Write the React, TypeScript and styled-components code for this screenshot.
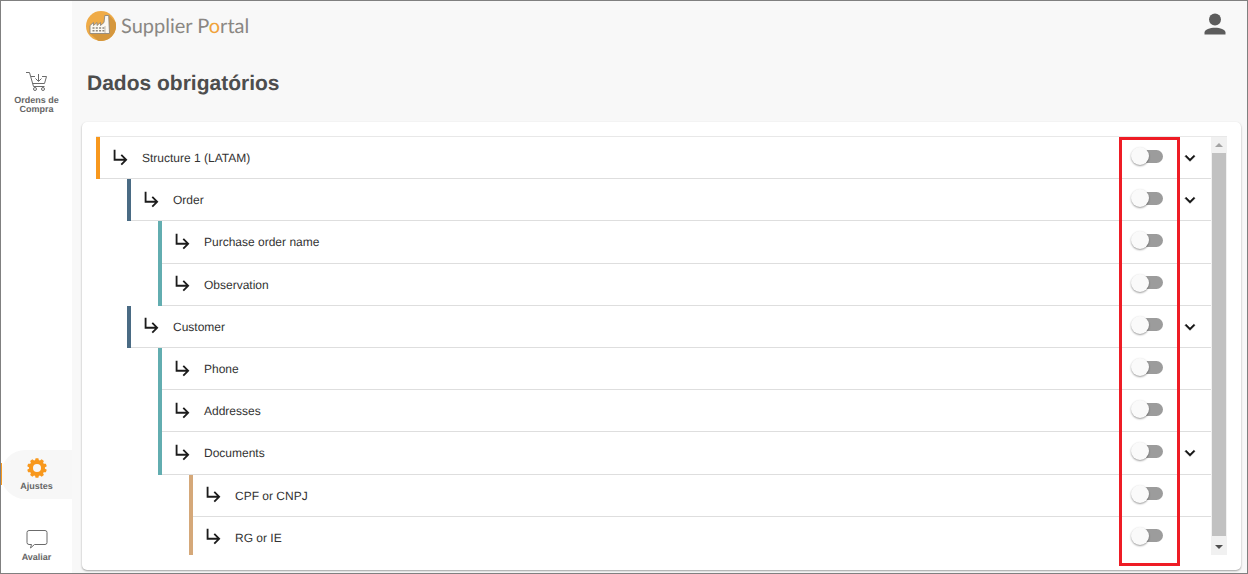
import React from "react";
import styled, { createGlobalStyle } from "styled-components";

const GlobalStyle = createGlobalStyle`
  * { box-sizing: border-box; }
  body { margin: 0; background: #f8f8f8; font-family: "Liberation Sans", Arial, sans-serif; color: #333; text-rendering: geometricPrecision; }
  button { border: 0; padding: 0; background: none; cursor: pointer; }
`;

const Shell = styled.div`
  display: flex;
  min-height: 100vh;
  border: 1px solid #808080;
`;

const Sidebar = styled.nav`
  flex: 0 0 71px;
  display: flex;
  flex-direction: column;
  padding: 67px 0 3px;
  background: #fff;
`;

const NavSpacer = styled.div`
  flex: 1;
`;

const NavLink = styled.a<{ $active?: boolean }>`
  display: flex;
  flex-direction: column;
  align-items: center;
  justify-content: center;
  gap: 4px;
  min-height: 49px;
  margin-bottom: 22px;
  border-radius: 25px 0 0 25px;
  background: ${(p) => (p.$active ? "#f7f7f7" : "transparent")};
  position: relative;
  color: #666;
  font-size: 9px;
  font-weight: 700;
  line-height: 9px;
  text-align: center;
  text-decoration: none;
  &:last-child { margin-bottom: 0; }
`;

const ActiveMark = styled.span`
  position: absolute;
  left: 0;
  top: 13px;
  width: 1px;
  height: 22px;
  background: #f8981d;
`;

const Main = styled.main`
  flex: 1;
  min-width: 0;
  display: flex;
  flex-direction: column;
  padding: 0 6px 3px 10px;
`;

const Header = styled.header`
  display: flex;
  align-items: center;
  justify-content: space-between;
  height: 50px;
  padding: 0 15px 1px 4px;
`;

const Brand = styled.a`
  display: flex;
  align-items: center;
  gap: 5px;
  color: #8a8783;
  font-family: Lato, sans-serif;
  font-size: 20px;
  line-height: 24px;
  text-decoration: none;
`;

const Accent = styled.span`
  color: #f0a33a;
`;

const Title = styled.h1`
  margin: 0;
  padding: 20px 5px 25px;
  color: #4d4d4d;
  font-size: 21px;
  line-height: 26px;
`;

const Card = styled.section`
  flex: 1;
  display: flex;
  align-items: flex-start;
  padding: 14px;
  border-radius: 5px;
  background: #fff;
  box-shadow: 0 1px 2px rgba(0, 0, 0, 0.36);
`;

const Viewport = styled.div`
  flex: 1;
  display: flex;
  height: 419px;
  border-top: 1px solid #e8e8e8;
`;

const Tree = styled.div`
  flex: 1;
  position: relative;
`;

const Clip = styled.div`
  height: 418px;
  overflow: hidden;
`;

const Rows = styled.ul`
  display: grid;
  grid-auto-rows: 1fr;
  height: 422px;
  margin: 0;
  padding: 0;
  list-style: none;
`;

const levelColors = ["#f8981d", "#4a6b84", "#62adb0", "#d5a879"];

const Row = styled.li<{ $level: number }>`
  display: flex;
  align-items: center;
  margin-left: ${(p) => p.$level * 31}px;
  padding-left: 10px;
  border-left: 4px solid ${(p) => levelColors[p.$level]};
  box-shadow: inset 0 -1px #dedede;
`;

const BranchIcon = styled.svg`
  margin-bottom: 3px;
`;

const Name = styled.label`
  flex: 1;
  padding-left: 10px;
  font-size: 12px;
  line-height: 16px;
`;

const Toggle = styled.input`
  appearance: none;
  display: flex;
  align-items: center;
  width: 30px;
  height: 13px;
  margin: 0 17px 4px 0;
  border-radius: 7px;
  background: #9c9c9c;
  cursor: pointer;
  &::before {
    content: "";
    flex: none;
    width: 18px;
    height: 18px;
    margin-left: -2px;
    border-radius: 50%;
    background: #fafafa;
    box-shadow: 0 1px 2px rgba(0, 0, 0, 0.4);
  }
  &:checked { justify-content: flex-end; background: #f8c98d; }
`;

const Expander = styled.button`
  display: flex;
  width: 20px;
  height: 20px;
  margin-right: 11px;
  color: #111;
`;

const ExpanderSpace = styled.span`
  width: 31px;
`;

const Scrollbar = styled.div`
  display: flex;
  flex-direction: column;
  width: 16px;
  background: #f1f1f1;
`;

const ScrollButton = styled.button`
  display: grid;
  place-items: center;
  height: 16px;
`;

const Thumb = styled.div`
  flex: 1;
  margin: 0 1px 3px;
  background: #c1c1c1;
`;

const Highlight = styled.div`
  position: absolute;
  top: 0;
  right: 31px;
  width: 61px;
  height: 429px;
  border: 3px solid #ee1c25;
  pointer-events: none;
`;

const rows = [
  { name: "Structure 1 (LATAM)", level: 0, open: true },
  { name: "Order", level: 1, open: true },
  { name: "Purchase order name", level: 2 },
  { name: "Observation", level: 2 },
  { name: "Customer", level: 1, open: true },
  { name: "Phone", level: 2 },
  { name: "Addresses", level: 2 },
  { name: "Documents", level: 2, open: true },
  { name: "CPF or CNPJ", level: 3 },
  { name: "RG or IE", level: 3 },
];

const gear = Array.from({ length: 10 }, (_, i) => i * 36);

const FactoryLogo = () => (
  <svg width="30" height="30" viewBox="0 0 30 30" aria-hidden="true">
    <circle cx="15" cy="15" r="15" fill="#efab47" />
    <path d="M23 4L29.5 11A15 15 0 0 1 12 29.7L4 22.5L23 22.5Z" fill="#d5973d" />
    <path d="M4 22.5V14.5L7.5 11.5V14.5L11 11.5V14.5L14.5 11.5V14.5L18 11.5L18.8 4.5H22.7L23.5 22.5Z" fill="#fbf8f2" stroke="#8d877e" strokeWidth="0.9" />
    <path d="M6.5 17H18.5M6.5 19.8H18.5" stroke="#8d877e" strokeWidth="1.6" strokeDasharray="2 1.3" />
    <path d="M19 15V22" stroke="#b5afa5" strokeWidth="0.8" />
  </svg>
);

const CartIcon = () => (
  <svg width="22" height="21" viewBox="0 0 22 21" fill="none" stroke="#6b6b6b" strokeWidth="1" aria-hidden="true">
    <path d="M0 1.5H3.5L7.5 15.5H18.5M5 5.5H9M16 5.5H20.5L18.5 12.5H6.5" />
    <path d="M12.5 3V10M9.5 7.5L12.5 10.5L15.5 7.5" />
    <circle cx="9" cy="18" r="1.5" />
    <circle cx="17" cy="18" r="1.5" />
  </svg>
);

const GearIcon = () => (
  <svg width="20" height="20" viewBox="0 0 20 20" aria-hidden="true">
    <circle cx="10" cy="10" r="6" fill="none" stroke="#f8981d" strokeWidth="4" />
    {gear.map((angle) => (
      <path key={angle} d="M7.9 3L8.6 0.2H11.4L12.1 3Z" fill="#f8981d" transform={`rotate(${angle} 10 10)`} />
    ))}
  </svg>
);

const ChatIcon = () => (
  <svg width="22" height="20" viewBox="0 0 22 20" fill="none" stroke="#6b6b6b" strokeWidth="1" aria-hidden="true">
    <path d="M3 1.5H19Q21 1.5 21 3.5V13.5Q21 15.5 19 15.5H8.5L4.5 19L5.5 15.5H3Q1 15.5 1 13.5V3.5Q1 1.5 3 1.5Z" />
  </svg>
);

const App = () => (
  <>
    <GlobalStyle />
    <Shell>
      <Sidebar>
        <NavLink href="#ordens">
          <CartIcon />
          <span>Ordens de<br />Compra</span>
        </NavLink>
        <NavSpacer />
        <NavLink href="#ajustes" $active>
          <ActiveMark />
          <GearIcon />
          Ajustes
        </NavLink>
        <NavLink href="#avaliar">
          <ChatIcon />
          Avaliar
        </NavLink>
      </Sidebar>
      <Main>
        <Header>
          <Brand href="#inicio">
            <FactoryLogo />
            <span>Supplier P<Accent>o</Accent>rtal</span>
          </Brand>
          <button type="button" aria-label="Perfil">
            <svg width="22" height="22" viewBox="0 0 22 22" fill="#5c5c5c">
              <circle cx="11" cy="6.5" r="6" />
              <path d="M0.5 21.5V19.5C0.5 16.5 6 14.8 11 14.8S21.5 16.5 21.5 19.5V21.5Z" />
            </svg>
          </button>
        </Header>
        <Title>Dados obrigatórios</Title>
        <Card>
          <Viewport>
            <Tree>
              <Clip>
                <Rows>
                  {rows.map((row, i) => (
                    <Row key={row.name} $level={row.level}>
                      <BranchIcon width="22" height="22" viewBox="0 0 24 24" fill="#1c1c1c" aria-hidden="true">
                        <path d="M19 15l-6 6-1.42-1.42L15.17 16H4V4h2v10h9.17l-3.59-3.58L13 9l6 6z" />
                      </BranchIcon>
                      <Name htmlFor={`field-${i}`}>{row.name}</Name>
                      <Toggle type="checkbox" role="switch" id={`field-${i}`} />
                      {row.open ? (
                        <Expander type="button" aria-label={`Recolher ${row.name}`}>
                          <svg width="20" height="20" viewBox="0 0 24 24" fill="currentColor" stroke="currentColor" strokeWidth="0.6">
                            <path d="M16.59 8.59L12 13.17 7.41 8.59 6 10l6 6 6-6z" />
                          </svg>
                        </Expander>
                      ) : (
                        <ExpanderSpace />
                      )}
                    </Row>
                  ))}
                </Rows>
              </Clip>
              <Highlight />
            </Tree>
            <Scrollbar>
              <ScrollButton type="button" aria-label="Rolar para cima">
                <svg width="8" height="4" viewBox="0 0 8 4"><path d="M0 4L4 0L8 4Z" fill="#a3a3a3" /></svg>
              </ScrollButton>
              <Thumb />
              <ScrollButton type="button" aria-label="Rolar para baixo">
                <svg width="8" height="4" viewBox="0 0 8 4"><path d="M0 0L4 4L8 0Z" fill="#505050" /></svg>
              </ScrollButton>
            </Scrollbar>
          </Viewport>
        </Card>
      </Main>
    </Shell>
  </>
);

export default App;
